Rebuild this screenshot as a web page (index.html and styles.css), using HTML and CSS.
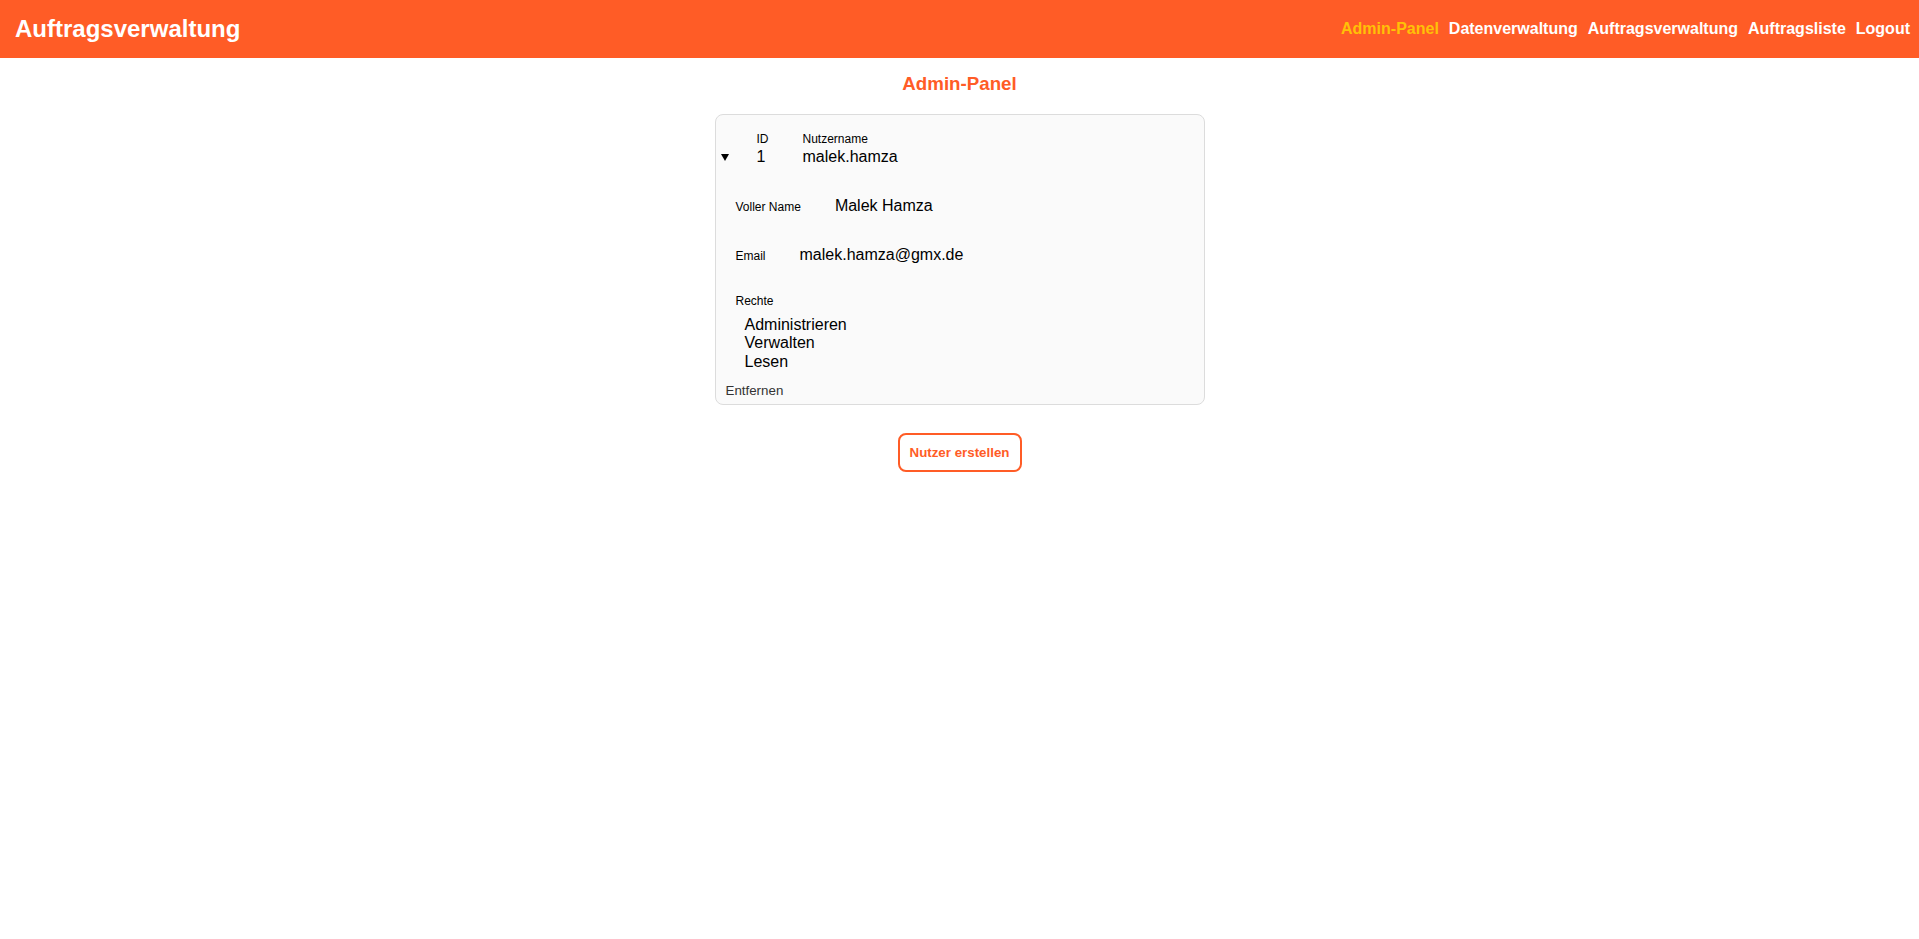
FILE: index.html
```html
<!DOCTYPE html>
<html lang="de">
<head>
<meta charset="utf-8">
<title>Auftragsverwaltung</title>
<link rel="stylesheet" href="styles.css">
</head>
<body>
<header class="topbar">
  <h1 class="brand">Auftragsverwaltung</h1>
  <nav class="nav">
    <a class="nav-link active" href="#">Admin-Panel</a>
    <a class="nav-link" href="#">Datenverwaltung</a>
    <a class="nav-link" href="#">Auftragsverwaltung</a>
    <a class="nav-link" href="#">Auftragsliste</a>
    <a class="nav-link" href="#">Logout</a>
  </nav>
</header>
<main class="main">
  <h3 class="page-title">Admin-Panel</h3>
  <section class="card">
    <div class="summary">
      <span class="marker"></span>
      <div class="col col-id"><span class="lbl">ID</span><span class="val">1</span></div>
      <div class="col"><span class="lbl">Nutzername</span><span class="val">malek.hamza</span></div>
    </div>
    <div class="field field-name"><span class="lbl">Voller Name</span><span class="val">Malek Hamza</span></div>
    <div class="field field-mail"><span class="lbl">Email</span><span class="val">malek.hamza@gmx.de</span></div>
    <div class="rights">
      <span class="lbl">Rechte</span>
      <ul class="rights-list">
        <li>Administrieren</li>
        <li>Verwalten</li>
        <li>Lesen</li>
      </ul>
    </div>
    <button class="remove" type="button">Entfernen</button>
  </section>
  <div class="actions">
    <button class="create" type="button">Nutzer erstellen</button>
  </div>
</main>
</body>
</html>
```
FILE: styles.css
```css
html, body {
  margin: 0;
  padding: 0;
  background: #ffffff;
  font-family: "Liberation Sans", Arial, sans-serif;
  color: #000;
}

.topbar {
  height: 58px;
  background: #ff5c26;
  display: flex;
  align-items: center;
  justify-content: space-between;
  padding: 0 9px 0 15px;
}

.brand {
  margin: 0;
  font-size: 24px;
  font-weight: bold;
  color: #ffffff;
  line-height: 28px;
}

.nav {
  display: flex;
  gap: 10px;
}

.nav-link {
  font-size: 16px;
  font-weight: bold;
  color: #ffffff;
  text-decoration: none;
  line-height: 18px;
}

.nav-link.active {
  color: #ffc107;
}

.main {
  display: flex;
  flex-direction: column;
  align-items: center;
}

.page-title {
  margin: 15.3px 0 18.7px;
  font-size: 18.72px;
  line-height: 22px;
  font-weight: bold;
  color: #ff5c26;
}

.card {
  box-sizing: border-box;
  width: 490px;
  background: #fafafa;
  border: 1px solid #dcdcdc;
  border-radius: 8px;
  padding: 0 0 5.6px 0;
  display: flex;
  flex-direction: column;
  align-items: flex-start;
}

.lbl {
  font-size: 12px;
  line-height: 14px;
}

.val {
  font-size: 16px;
  line-height: 18px;
}

.summary {
  display: flex;
  align-items: flex-end;
  padding: 17.3px 0 0 5px;
}

.marker {
  width: 0;
  height: 0;
  border-left: 4.5px solid transparent;
  border-right: 4.5px solid transparent;
  border-top: 7px solid #000;
  margin: 0 28px 5.3px 0;
}

.col {
  display: flex;
  flex-direction: column;
}

.col .val {
  margin-top: 2px;
}

.col-id {
  width: 46px;
}

.field {
  display: flex;
  align-items: baseline;
  gap: 34px;
  padding-left: 20px;
}

.field-name {
  margin-top: 30.4px;
}

.field-mail {
  margin-top: 31px;
}

.rights {
  display: flex;
  flex-direction: column;
  margin-top: 30.3px;
  padding-left: 20px;
}

.rights-list {
  list-style: none;
  margin: 8px 0 0 9px;
  padding: 0;
  font-size: 16px;
  line-height: 18.4px;
}

.remove {
  margin: 10.7px 0 0 4px;
  padding: 1px 6px;
  border: 0;
  background: transparent;
  font-family: "Liberation Sans", Arial, sans-serif;
  font-size: 13.33px;
  line-height: 15px;
  color: #333;
}

.actions {
  margin-top: 27.7px;
}

.create {
  box-sizing: border-box;
  height: 39px;
  padding: 0 10px;
  border: 2px solid #ff5c26;
  border-radius: 8px;
  background: #ffffff;
  color: #ff5c26;
  font-family: "Liberation Sans", Arial, sans-serif;
  font-size: 13.33px;
  font-weight: bold;
  line-height: 16px;
}
```
